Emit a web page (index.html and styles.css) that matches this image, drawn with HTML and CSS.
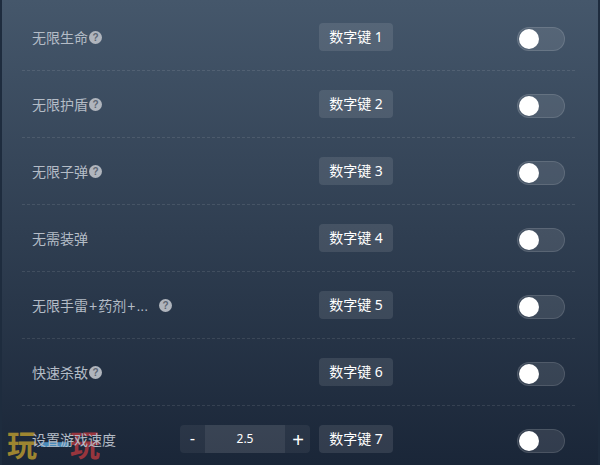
FILE: index.html
```html
<!DOCTYPE html>
<html lang="zh-CN">
<head>
    <meta charset="UTF-8">
    <title>修改器</title>
    <link rel="stylesheet" href="styles.css">
</head>
<body>
    <div class="watermark"><span class="gold">玩</span><span class="blue">一</span><span class="red">玩</span></div>
    <div class="panel">
        <div class="row">
            <div class="label"><span class="name">无限生命</span><span class="help">?</span></div>
            <div class="key">数字键 1</div>
            <div class="toggle"><span class="knob"></span></div>
        </div>
        <div class="row">
            <div class="label"><span class="name">无限护盾</span><span class="help">?</span></div>
            <div class="key">数字键 2</div>
            <div class="toggle"><span class="knob"></span></div>
        </div>
        <div class="row">
            <div class="label"><span class="name">无限子弹</span><span class="help">?</span></div>
            <div class="key">数字键 3</div>
            <div class="toggle"><span class="knob"></span></div>
        </div>
        <div class="row">
            <div class="label"><span class="name">无需装弹</span></div>
            <div class="key">数字键 4</div>
            <div class="toggle"><span class="knob"></span></div>
        </div>
        <div class="row">
            <div class="label"><span class="name long">无限手雷<span class="sep">+</span>药剂<span class="sep">+</span>...</span><span class="help">?</span></div>
            <div class="key">数字键 5</div>
            <div class="toggle"><span class="knob"></span></div>
        </div>
        <div class="row">
            <div class="label"><span class="name">快速杀敌</span><span class="help">?</span></div>
            <div class="key">数字键 6</div>
            <div class="toggle"><span class="knob"></span></div>
        </div>
        <div class="row last">
            <div class="label"><span class="name">设置游戏速度</span></div>
            <div class="stepper">
                <span class="step">-</span>
                <span class="value">2.5</span>
                <span class="step plus">+</span>
            </div>
            <div class="key">数字键 7</div>
            <div class="toggle"><span class="knob"></span></div>
        </div>
    </div>
</body>
</html>
```

FILE: styles.css
```css
* { box-sizing: border-box; }
html, body { height: 100%; }
body { margin: 0; height: 465px; overflow: hidden; position: relative; background: linear-gradient(180deg, #45576b 0%, #1a2638 100%); font-family: "Liberation Sans", "Noto Sans CJK SC", sans-serif; border-left: 2px solid #1e2c3e; border-right: 2px solid #1e2c3e; }
.panel { position: relative; padding: 4px 23px 0 20px; }
.row { display: flex; align-items: center; height: 67px; border-bottom: 1px dashed rgba(255, 255, 255, 0.1); }
.row.last { height: 66px; border-bottom: none; }
.label { width: 297px; padding-left: 10px; display: flex; align-items: center; color: #b4bcc6; font-size: 14px; }
.row.last .label { width: 158px; }
.name.long { margin-right: 10px; }
.sep { margin: 0 1px; }
.help { width: 13px; height: 13px; margin-left: 1px; border-radius: 50%; background: #b0b5bd; color: #5c6673; font-size: 10px; font-weight: bold; line-height: 13px; text-align: center; }
.key { width: 74px; height: 28px; border-radius: 4px; background: rgba(255, 255, 255, 0.1); color: #fff; font-family: "Noto Sans", "Noto Sans CJK SC", sans-serif; font-size: 14px; line-height: 28px; text-align: center; }
.toggle { width: 48px; height: 24px; margin: 4px 0 0 124px; padding: 1px; border-radius: 12px; background: rgba(255, 255, 255, 0.1); border: 1px solid rgba(255, 255, 255, 0.12); }
.knob { display: block; width: 20px; height: 20px; border-radius: 50%; background: #fff; }
.stepper { display: flex; width: 130px; height: 28px; margin-right: 9px; border-radius: 4px; overflow: hidden; background: rgba(255, 255, 255, 0.06); color: #fff; }
.step { width: 25px; font-size: 16px; line-height: 28px; text-align: center; }
.step.plus { font-size: 20px; line-height: 31px; padding-left: 1px; }
.value { width: 80px; background: rgba(255, 255, 255, 0.07); font-size: 12px; font-family: "Noto Sans", sans-serif; line-height: 27px; text-align: center; }
.watermark { position: absolute; left: 5px; top: 425px; display: flex; font-family: "Noto Sans CJK SC", serif; font-size: 30px; font-weight: 700; line-height: 36px; opacity: 0.75; }
.gold { color: #c9a52e; width: 33px; }
.blue { color: #5aaee8; width: 30px; font-weight: 900; }
.red { color: #c23a3f; }
```
